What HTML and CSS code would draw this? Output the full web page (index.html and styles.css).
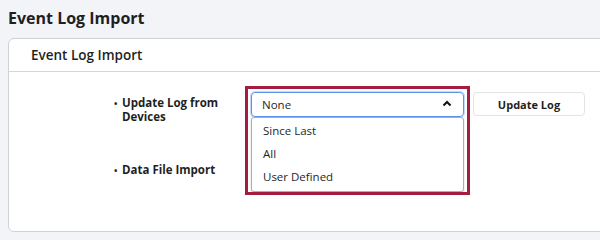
FILE: index.html
```html
<!DOCTYPE html>
<html lang="en">
<head>
  <meta charset="UTF-8">
  <title>Event Log Import</title>
  <link rel="stylesheet" href="styles.css">
</head>
<body>

<h1 class="page-title">Event Log Import</h1>

<div class="card">
  <div class="card-header">Event Log Import</div>
  <div class="card-body">

    <div class="form-row">
      <div class="label">Update Log from<br>Devices</div>
      <div class="select-wrap">
        <div class="select">
          <span>None</span>
          <svg class="chevron" width="10" height="7" viewBox="0 0 10 7">
            <polyline points="1.5,5.5 5,2 8.5,5.5" fill="none" stroke="#111" stroke-width="2"/>
          </svg>
        </div>
        <ul class="menu">
          <li>Since Last</li>
          <li>All</li>
          <li>User Defined</li>
        </ul>
        <div class="highlight"></div>
      </div>
      <button class="btn">Update Log</button>
    </div>

    <div class="form-row second">
      <div class="label">Data File Import</div>
    </div>

  </div>
</div>

</body>
</html>
```

FILE: styles.css
```css
body {
  margin: 0;
  background-color: #f3f4f8;
  font-family: 'Open Sans', 'Noto Sans', Arial, sans-serif;
  color: #1f1f1f;
  overflow: hidden;
}

.page-title {
  margin: 0;
  padding: 6px 8px 0;
  font-size: 16px;
  font-weight: 700;
  line-height: 24px;
}

.card {
  margin: 8px -20px 0 8px;
  height: 194px;
  box-sizing: border-box;
  background-color: #fff;
  border: 1px solid #cfd1d5;
  border-radius: 6px;
}

.card-header {
  height: 32px;
  line-height: 32px;
  padding-left: 22px;
  font-size: 13.5px;
  font-weight: 600;
  border-bottom: 1px solid #d6d7da;
}

.card-body {
  padding: 20px 0 0 104px;
}

.form-row {
  display: flex;
  align-items: flex-start;
}

.form-row.second {
  margin-top: 35px;
}

.label {
  display: list-item;
  list-style: "•\2002" outside;
  margin-left: 9px;
  width: 129px;
  padding-top: 4px;
  font-size: 11.5px;
  font-weight: 700;
  line-height: 14px;
}

.label::marker {
  font-size: 9px;
}

.select-wrap {
  position: relative;
  width: 213px;
}

.select {
  display: flex;
  align-items: center;
  justify-content: space-between;
  height: 25px;
  box-sizing: border-box;
  padding: 0 11px 0 10px;
  border: 1px solid #5b93ee;
  box-shadow: 0 0 0 1px #c6d9f8;
  border-radius: 4px;
  font-size: 11.5px;
}

.chevron {
  margin-top: -2px;
}

.menu {
  position: absolute;
  top: 25px;
  left: 0;
  right: 0;
  margin: 0;
  padding: 2px 0;
  list-style: none;
  background-color: #fff;
  border: 1px solid #aeaeae;
  border-radius: 3px;
  box-shadow: 0 1px 2px rgba(0,0,0,0.2);
}

.menu li {
  height: 23px;
  line-height: 22px;
  padding-left: 11px;
  font-size: 11.5px;
}

.highlight {
  position: absolute;
  top: -6px;
  left: -6px;
  width: 219px;
  height: 103px;
  border: 3px solid #a21d40;
}

.btn {
  margin-left: 9px;
  width: 112px;
  height: 24px;
  background-color: #fff;
  border: 1px solid #e3e4e6;
  border-radius: 4px;
  font-family: inherit;
  font-size: 11px;
  font-weight: 700;
  color: #1f1f1f;
}
```
